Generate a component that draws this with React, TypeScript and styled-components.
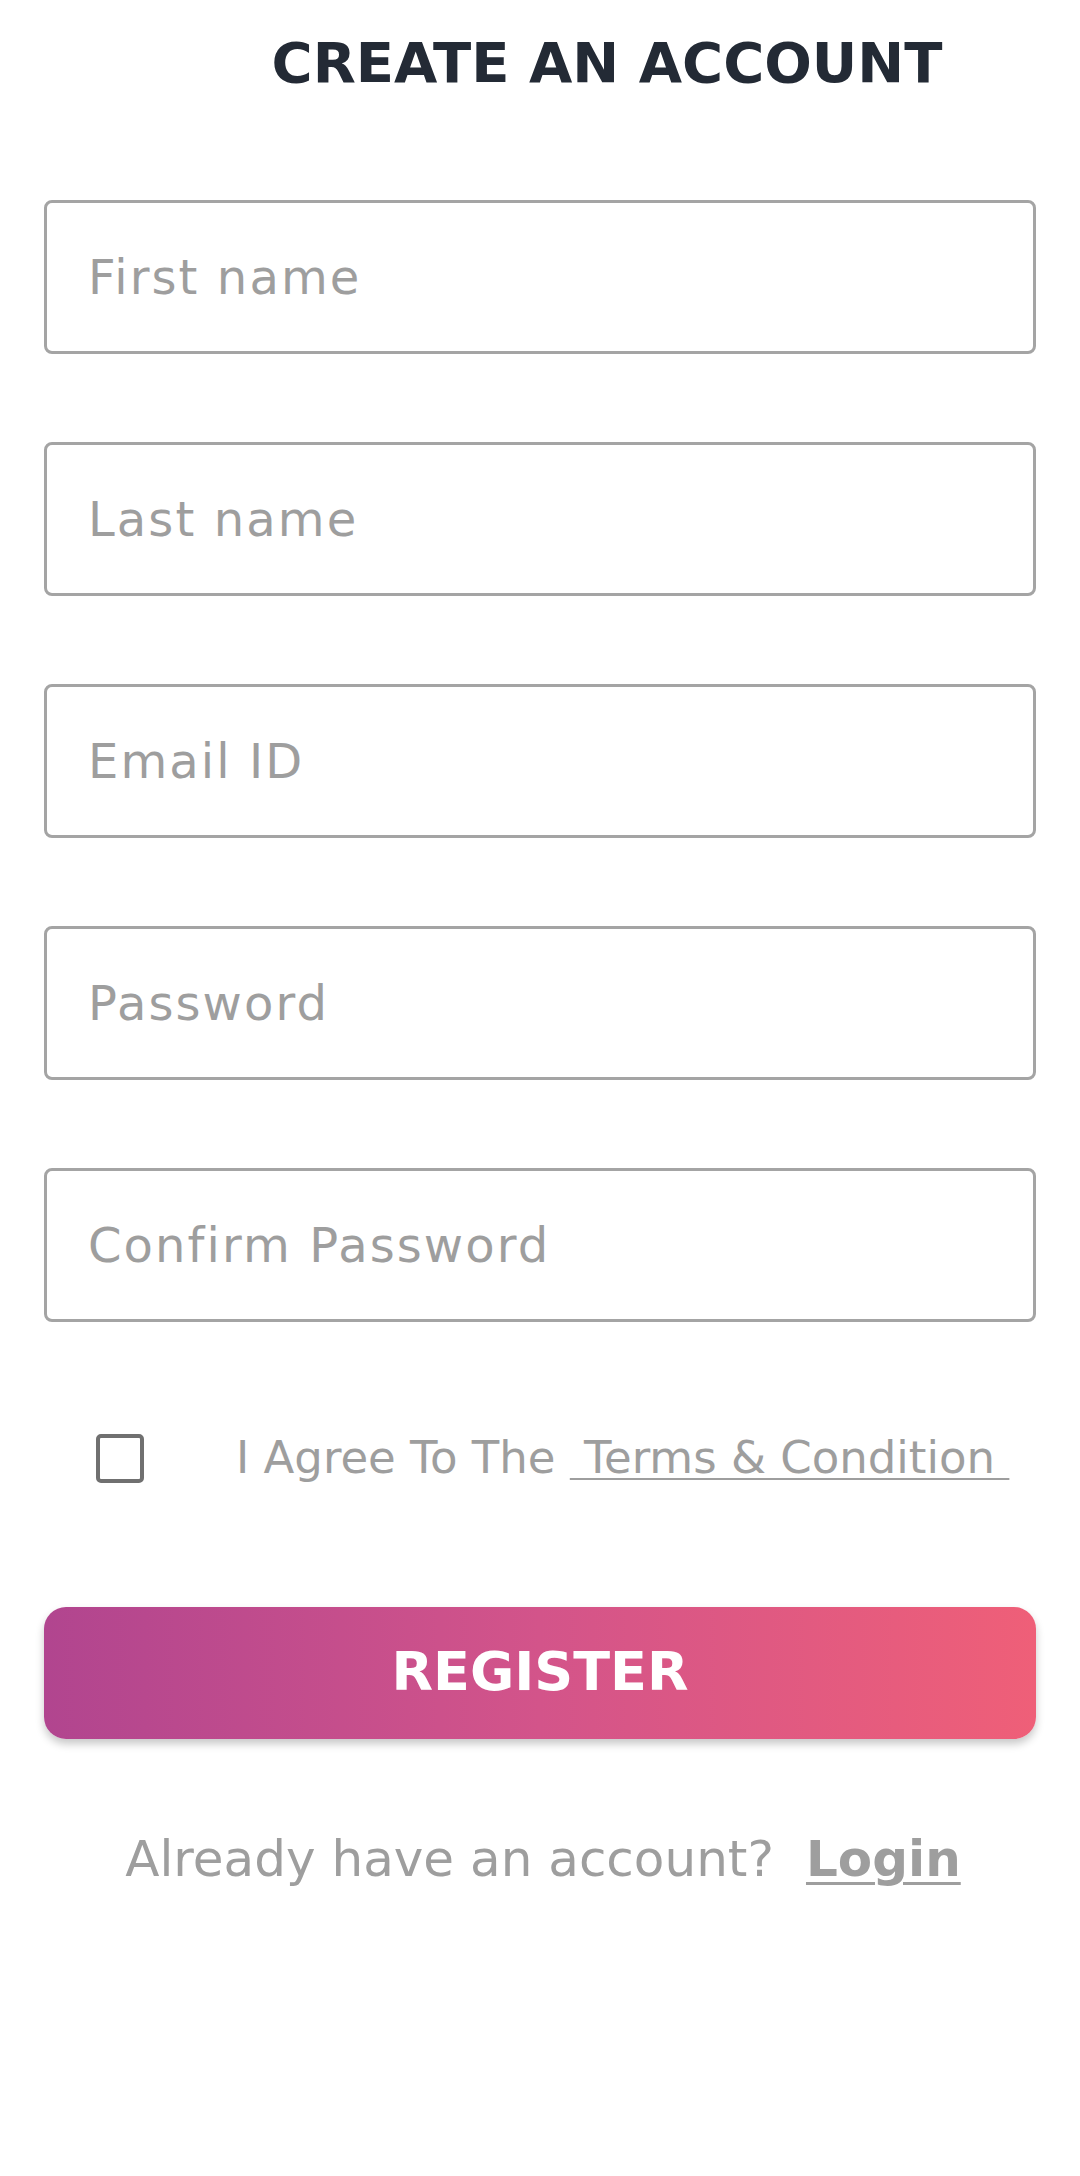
import React from "react";
import styled, { createGlobalStyle } from "styled-components";

const GlobalStyle = createGlobalStyle`
  html, body {
    margin: 0;
    padding: 0;
    background: #ffffff;
  }
  body {
    font-family: "DejaVu Sans", "Noto Sans", sans-serif;
  }
  * {
    box-sizing: border-box;
  }
`;

const Page = styled.div`
  width: 1080px;
  min-height: 2176px;
  padding: 28px 44px 0;
  display: flex;
  flex-direction: column;
  background: #ffffff;
`;

const Title = styled.h1`
  margin: 0;
  padding-left: 134px;
  text-align: center;
  font-size: 56px;
  line-height: 70px;
  font-weight: 700;
  color: #232a35;
`;

const Form = styled.form`
  margin-top: 102px;
  display: flex;
  flex-direction: column;
`;

const Fields = styled.div`
  display: flex;
  flex-direction: column;
  gap: 88px;
`;

const Field = styled.input`
  width: 100%;
  height: 154px;
  border: 3px solid #a4a4a4;
  border-radius: 8px;
  padding: 0 0 0 41px;
  font-family: "DejaVu Sans", sans-serif;
  font-size: 48px;
  letter-spacing: 2.1px;
  color: #333;
  background: #fff;
  outline: none;
  &::placeholder {
    color: #9e9e9e;
    opacity: 1;
  }
`;

const AgreeRow = styled.label`
  margin-top: 106px;
  height: 60px;
  display: flex;
  align-items: center;
  padding-left: 52px;
  font-size: 45px;
  line-height: 60px;
  color: #9e9e9e;
`;

const CheckBox = styled.span`
  flex: none;
  width: 48px;
  height: 49px;
  border: 4px solid #707070;
  border-radius: 5px;
  margin-right: 92px;
  background: #fff;
`;

const AgreeText = styled.span`
  white-space: pre;
`;

const TermsLink = styled.a`
  color: #9e9e9e;
  text-decoration: underline;
  text-decoration-thickness: 2px;
  text-underline-offset: 5px;
  white-space: pre;
`;

const RegisterButton = styled.button`
  margin-top: 119px;
  width: 100%;
  height: 132px;
  border: none;
  border-radius: 22px;
  background: linear-gradient(90deg, #b1458f 0%, #d3548a 50%, #ef5f78 100%);
  box-shadow: 0 5px 8px rgba(0, 0, 0, 0.22);
  color: #ffffff;
  font-family: "DejaVu Sans", sans-serif;
  font-size: 54px;
  font-weight: 700;
  display: flex;
  align-items: center;
  justify-content: center;
  padding: 0 0 4px 0;
`;

const Footer = styled.div`
  margin-top: 90px;
  display: flex;
  justify-content: center;
  align-items: baseline;
  gap: 32px;
  padding-left: 6px;
  font-size: 50px;
  line-height: 60px;
  color: #9e9e9e;
`;

const LoginLink = styled.a`
  font-weight: 700;
  color: #9e9e9e;
  text-decoration: underline;
  text-decoration-thickness: 3px;
  text-underline-offset: 6px;
`;

const fields = ["First name", "Last name", "Email ID", "Password", "Confirm Password"];

export default function App() {
  return (
    <>
      <GlobalStyle />
      <Page>
        <Title>CREATE AN ACCOUNT</Title>
        <Form onSubmit={(e) => e.preventDefault()}>
          <Fields>
            {fields.map((f) => (
              <Field
                key={f}
                placeholder={f}
                type={f.includes("Password") ? "password" : f === "Email ID" ? "email" : "text"}
              />
            ))}
          </Fields>
          <AgreeRow>
            <CheckBox />
            <AgreeText>I Agree To The </AgreeText>
            <TermsLink> Terms &amp; Condition </TermsLink>
          </AgreeRow>
          <RegisterButton type="submit">REGISTER</RegisterButton>
          <Footer>
            <span>Already have an account?</span>
            <LoginLink>Login</LoginLink>
          </Footer>
        </Form>
      </Page>
    </>
  );
}
